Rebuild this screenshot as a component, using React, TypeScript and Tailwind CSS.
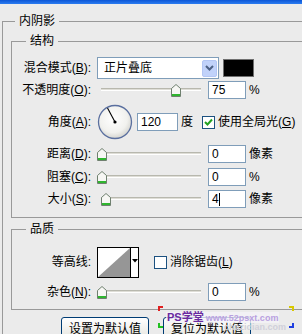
import React from 'react';

// XP-style Photoshop "inner shadow" layer style panel

function Key({ k }: { k: string }) {
  return (
    <>
      (<span className="underline underline-offset-1">{k}</span>)
    </>
  );
}

function Label({ children }: { children: React.ReactNode }) {
  return <div className="w-[80px] shrink-0 text-right pr-[1px]">{children}</div>;
}

function Thumb() {
  return (
    <svg width="10" height="13" viewBox="0 0 10 13" className="block">
      <path d="M0.5 4.5 L5 0.5 L9.5 4.5 L9.5 12.5 L0.5 12.5 Z" fill="#F7F7F4" stroke="#6F806F" />
      <rect x="1" y="10" width="8" height="2" fill="#2FB62F" />
    </svg>
  );
}

function Slider({ at }: { at: number }) {
  return (
    <div className="relative w-[104px] h-[18px] shrink-0">
      <div className="absolute left-[4px] right-0 top-[7px] h-[3px] border-t border-[#B8B8AE] bg-[#DEDDD6] border-b border-b-white" />
      <div className="absolute top-[3px]" style={{ left: at }}>
        <Thumb />
      </div>
    </div>
  );
}

function Field({ value, w = 38, cursor = false }: { value: string; w?: number; cursor?: boolean }) {
  return (
    <div
      className="h-[18px] border border-[#7F9DB9] bg-white flex items-center pl-[3px] shrink-0"
      style={{ width: w }}
    >
      <span>{value}</span>
      {cursor && <span className="inline-block w-px h-[13px] bg-black" />}
    </div>
  );
}

function Check({ on }: { on: boolean }) {
  return (
    <div className="w-[13px] h-[13px] border border-[#1C5180] bg-white shrink-0 flex items-center justify-center">
      {on && (
        <svg width="9" height="9" viewBox="0 0 9 9">
          <path d="M1 4 L3.5 6.5 L8 1.5" fill="none" stroke="#21A121" strokeWidth="2" />
        </svg>
      )}
    </div>
  );
}

export default function App() {
  return (
    <div className="relative w-[302px] h-[334px] overflow-hidden bg-[#EBEBEB] text-black text-[12px] leading-[16px] [font-family:'Liberation_Sans','Noto_Sans_CJK_SC',sans-serif]">
      <div className="h-[4px] bg-gradient-to-b from-[#0B56D6] to-[#2B7CF0]" />

      <fieldset className="mt-[9px] ml-[2px] w-[340px] h-[400px] border border-[#999999] p-0">
        <legend className="ml-[12px] px-[4px] leading-[16px]">内阴影</legend>

        {/* 结构 */}
        <fieldset className="mt-[4px] ml-[8px] w-[330px] border border-[#999999] p-0 pt-[8px] pb-[9px]">
          <legend className="ml-[14px] px-[4px] leading-[16px]">结构</legend>

          <div className="flex items-center h-[22px]">
            <Label>混合模式<Key k="B" />:</Label>
            <div className="ml-[5px] w-[122px] h-[22px] border border-[#7F9DB9] bg-white flex items-center pl-[6px]">
              <span>正片叠底</span>
              <div className="ml-auto mr-[1px] w-[15px] h-[17px] rounded-[2px] bg-[#C1D2FA] border border-[#B3C6F4] flex items-center justify-center">
                <svg width="9" height="6" viewBox="0 0 9 6">
                  <path d="M1 1 L4.5 4.5 L8 1" fill="none" stroke="#4D6185" strokeWidth="2" />
                </svg>
              </div>
            </div>
            <div className="ml-[4px] w-[31px] h-[18px] border border-[#6F6F6F] bg-black" />
          </div>

          <div className="flex items-center h-[20px] mt-[1px]">
            <Label>不透明度<Key k="O" />:</Label>
            <div className="ml-[5px] flex items-center">
              <Slider at={74} />
              <div className="ml-[7px]"><Field value="75" /></div>
              <span className="ml-[3px]">%</span>
            </div>
          </div>

          <div className="flex items-center h-[38px] mt-[3px]">
            <Label>角度<Key k="A" />:</Label>
            <div className="ml-[5px] flex items-center">
              <svg width="36" height="36" viewBox="0 0 36 36" className="block shrink-0">
                <defs>
                  <radialGradient id="dialg" cx="45%" cy="40%" r="60%">
                    <stop offset="0%" stopColor="#FFFFFF" />
                    <stop offset="70%" stopColor="#F1F1EE" />
                    <stop offset="100%" stopColor="#D5D5D0" />
                  </radialGradient>
                </defs>
                <circle cx="18" cy="18" r="16.5" fill="url(#dialg)" stroke="#5A6F9F" strokeWidth="1.3" />
                <line x1="18" y1="18" x2="10.5" y2="4" stroke="#000" strokeWidth="1.1" />
                <circle cx="18" cy="18" r="1.6" fill="#000" />
              </svg>
              <div className="ml-[4px]"><Field value="120" w={41} /></div>
              <span className="ml-[3px]">度</span>
              <div className="ml-[9px]"><Check on /></div>
              <span className="ml-[3px]">使用全局光<Key k="G" /></span>
            </div>
          </div>

          <div className="flex items-center h-[18px] mt-[4px]">
            <Label>距离<Key k="D" />:</Label>
            <div className="ml-[5px] flex items-center">
              <Slider at={0} />
              <div className="ml-[7px]"><Field value="0" /></div>
              <span className="ml-[3px]">像素</span>
            </div>
          </div>

          <div className="flex items-center h-[18px] mt-[5px]">
            <Label>阻塞<Key k="C" />:</Label>
            <div className="ml-[5px] flex items-center">
              <Slider at={0} />
              <div className="ml-[7px]"><Field value="0" /></div>
              <span className="ml-[3px]">%</span>
            </div>
          </div>

          <div className="flex items-center h-[18px] mt-[4px]">
            <Label>大小<Key k="S" />:</Label>
            <div className="ml-[5px] flex items-center">
              <Slider at={4} />
              <div className="ml-[7px]"><Field value="4" cursor /></div>
              <span className="ml-[3px]">像素</span>
            </div>
          </div>
        </fieldset>

        {/* 品质 */}
        <fieldset className="mt-[3px] ml-[8px] w-[330px] border border-[#999999] p-0 pt-[9px] pb-[8px]">
          <legend className="ml-[14px] px-[4px] leading-[16px]">品质</legend>

          <div className="flex items-center h-[32px]">
            <Label>等高线:</Label>
            <div className="ml-[5px] flex items-center">
              <div className="w-[42px] h-[31px] border border-black bg-white flex">
                <svg width="32" height="29" viewBox="0 0 32 29" className="block">
                  <path d="M0 29 L32 0 L32 29 Z" fill="#969696" />
                </svg>
                <div className="flex-1 border-l border-black flex justify-center pt-[11px]">
                  <svg width="6" height="4" viewBox="0 0 6 4">
                    <path d="M0 0 L6 0 L3 3.5 Z" fill="#000" />
                  </svg>
                </div>
              </div>
              <div className="ml-[15px]"><Check on={false} /></div>
              <span className="ml-[3px]">消除锯齿<Key k="L" /></span>
            </div>
          </div>

          <div className="flex items-center h-[18px] mt-[5px]">
            <Label>杂色<Key k="N" />:</Label>
            <div className="ml-[5px] flex items-center">
              <Slider at={0} />
              <div className="ml-[7px]"><Field value="0" /></div>
              <span className="ml-[3px]">%</span>
            </div>
          </div>
        </fieldset>

        <div className="flex mt-[7px] ml-[58px]">
          <div className="w-[88px] h-[23px] border border-[#003C74] rounded-[3px] bg-gradient-to-b from-white to-[#E6E5DF] flex items-center justify-center">
            设置为默认值
          </div>
          <div className="ml-[14px] w-[88px] h-[23px] border border-[#003C74] rounded-[3px] bg-gradient-to-b from-white to-[#E6E5DF] flex items-center justify-center">
            复位为默认值
          </div>
        </div>
      </fieldset>

      {/* watermark */}
      <div className="absolute left-[158px] top-[306px] w-[136px] h-[26px] pointer-events-none">
        <div className="absolute left-0 top-0 w-[5px] h-[5px] border-l-2 border-t-2 border-[#E02020]" />
        <div className="absolute right-0 top-0 w-[5px] h-[5px] border-r-2 border-t-2 border-[#D8C800]" />
        <div className="absolute left-0 bottom-[4px] w-[5px] h-[5px] border-l-2 border-b-2 border-[#20C020]" />
        <div className="absolute right-0 bottom-[4px] w-[5px] h-[5px] border-r-2 border-b-2 border-[#2040E0]" />
        <div className="absolute left-[8px] top-[6px] flex items-center gap-[2px] bg-[#F4F2F8]/80 px-[1px]">
          <span className="text-[11px] leading-[11px] font-bold text-[#6A2AA0]">PS学堂</span>
          <span className="text-[9px] leading-[10px] font-bold text-[#B8A0E0]">www.52psxt.com</span>
        </div>
        <div className="absolute right-[8px] top-[17px] text-[9px] leading-[9px] font-bold text-[#D0D0DA]">chazidian.com</div>
      </div>
    </div>
  );
}
